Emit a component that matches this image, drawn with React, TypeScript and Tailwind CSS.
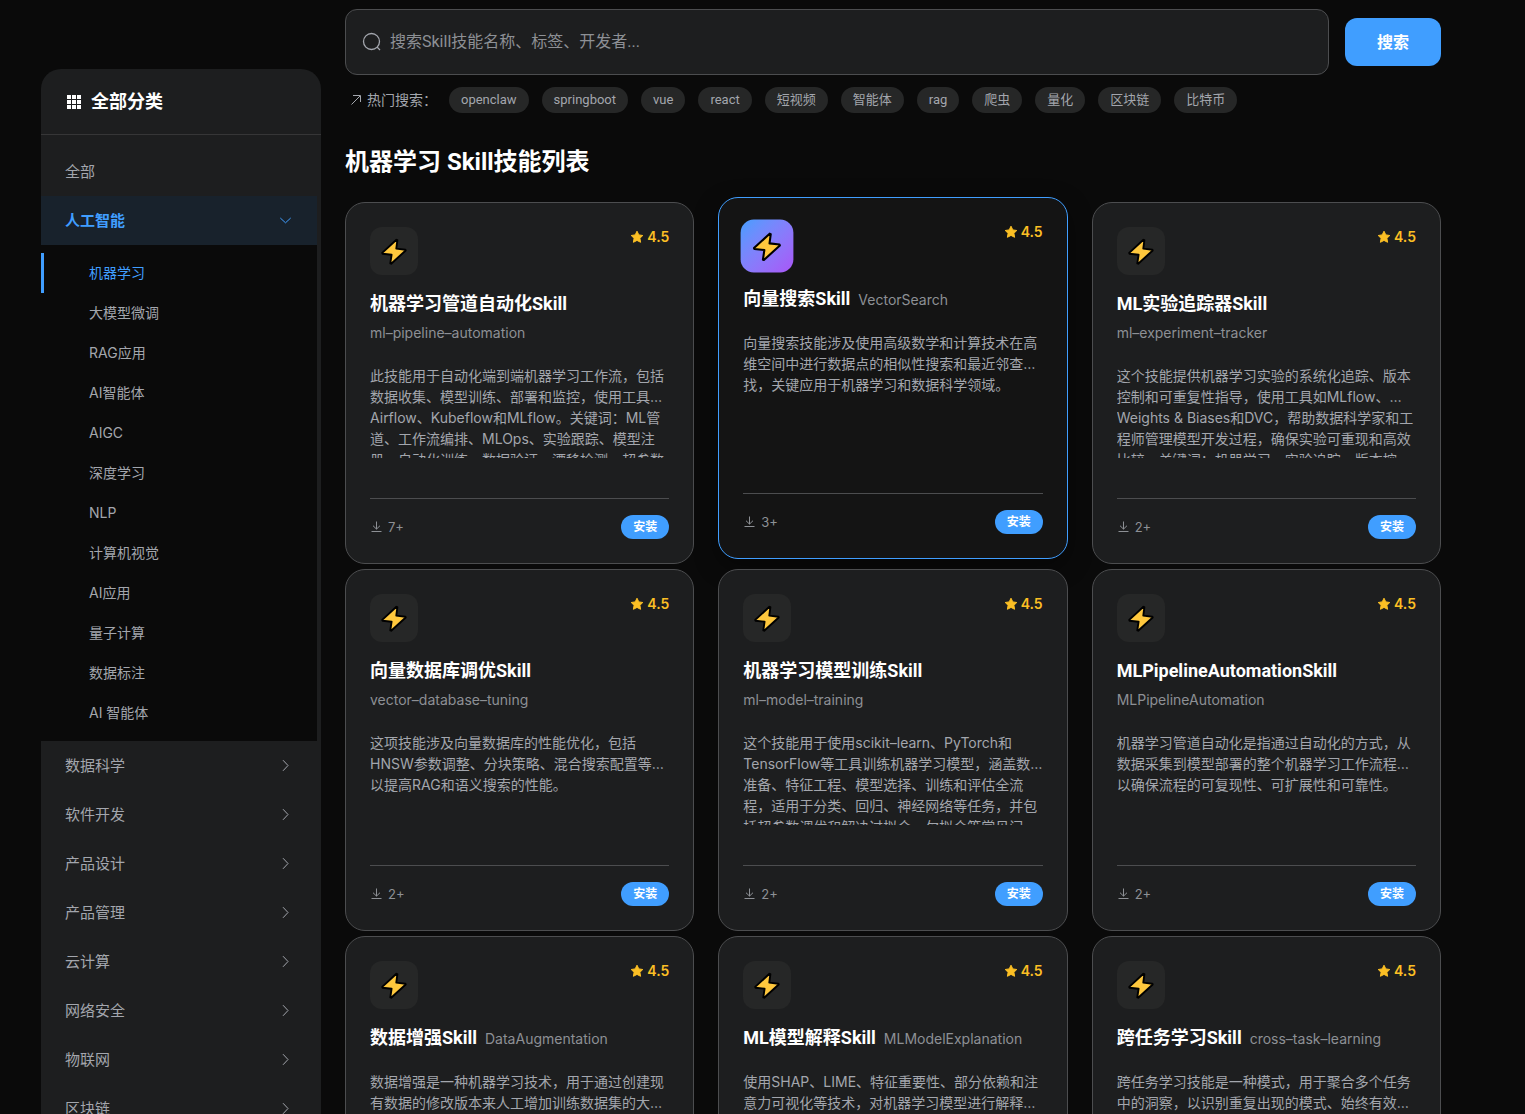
import React from "react";

const BODY_FONT = "font-['Inter','Noto_Sans_CJK_SC',sans-serif]";

const subItems = ["机器学习", "大模型微调", "RAG应用", "AI智能体", "AIGC", "深度学习", "NLP", "计算机视觉", "AI应用", "量子计算", "数据标注", "AI 智能体"];
const categories = ["数据科学", "软件开发", "产品设计", "产品管理", "云计算", "网络安全", "物联网", "区块链"];
const hotWords = ["openclaw", "springboot", "vue", "react", "短视频", "智能体", "rag", "爬虫", "量化", "区块链", "比特币"];

type Skill = { title: string; slug: string; stacked?: boolean; lines: string[]; count: string; active?: boolean };

const skills: Skill[] = [
  {
    title: "机器学习管道自动化Skill",
    slug: "ml–pipeline–automation",
    stacked: true,
    lines: ["此技能用于自动化端到端机器学习工作流，包括", "数据收集、模型训练、部署和监控，使用工具…", "Airflow、Kubeflow和MLflow。关键词：ML管", "道、工作流编排、MLOps、实验跟踪、模型注", "册、自动化训练、数据验证、漂移检测、超参数"],
    count: "7+",
  },
  {
    title: "向量搜索Skill",
    slug: "VectorSearch",
    lines: ["向量搜索技能涉及使用高级数学和计算技术在高", "维空间中进行数据点的相似性搜索和最近邻查…", "找，关键应用于机器学习和数据科学领域。"],
    count: "3+",
    active: true,
  },
  {
    title: "ML实验追踪器Skill",
    slug: "ml–experiment–tracker",
    stacked: true,
    lines: ["这个技能提供机器学习实验的系统化追踪、版本", "控制和可重复性指导，使用工具如MLflow、…", "Weights & Biases和DVC，帮助数据科学家和工", "程师管理模型开发过程，确保实验可重现和高效", "比较。关键词：机器学习、实验追踪、版本控"],
    count: "2+",
  },
  {
    title: "向量数据库调优Skill",
    slug: "vector–database–tuning",
    stacked: true,
    lines: ["这项技能涉及向量数据库的性能优化，包括", "HNSW参数调整、分块策略、混合搜索配置等…", "以提高RAG和语义搜索的性能。"],
    count: "2+",
  },
  {
    title: "机器学习模型训练Skill",
    slug: "ml–model–training",
    stacked: true,
    lines: ["这个技能用于使用scikit–learn、PyTorch和", "TensorFlow等工具训练机器学习模型，涵盖数…", "准备、特征工程、模型选择、训练和评估全流", "程，适用于分类、回归、神经网络等任务，并包", "括超参数调优和解决过拟合、欠拟合等常见问"],
    count: "2+",
  },
  {
    title: "MLPipelineAutomationSkill",
    slug: "MLPipelineAutomation",
    stacked: true,
    lines: ["机器学习管道自动化是指通过自动化的方式，从", "数据采集到模型部署的整个机器学习工作流程…", "以确保流程的可复现性、可扩展性和可靠性。"],
    count: "2+",
  },
  {
    title: "数据增强Skill",
    slug: "DataAugmentation",
    lines: ["数据增强是一种机器学习技术，用于通过创建现", "有数据的修改版本来人工增加训练数据集的大…"],
    count: "2+",
  },
  {
    title: "ML模型解释Skill",
    slug: "MLModelExplanation",
    lines: ["使用SHAP、LIME、特征重要性、部分依赖和注", "意力可视化等技术，对机器学习模型进行解释…"],
    count: "2+",
  },
  {
    title: "跨任务学习Skill",
    slug: "cross–task–learning",
    lines: ["跨任务学习技能是一种模式，用于聚合多个任务", "中的洞察，以识别重复出现的模式、始终有效…"],
    count: "2+",
  },
];

function Chevron({ down }: { down?: boolean }) {
  return (
    <svg viewBox="0 0 14 14" className="size-3.5" fill="none" stroke="currentColor" strokeWidth="1" aria-hidden="true">
      {down ? <path d="M1.3 4 6.5 8.800l5.200-4.800" /> : <path d="M4 1.200 9 6.500l-5 5.300" />}
    </svg>
  );
}

function Bolt({ className }: { className: string }) {
  return (
    <svg viewBox="0 0 28 28" className={className} aria-hidden="true">
      <path
        d="M16.400 2.800 2.200 15.900 2.500 16.700 11.600 17.700 10.300 26.400 11.200 26.700 25.700 13.500 25.400 12.700 16.300 11.600 17.400 3.200Z"
        fill="#ffc83d"
        stroke="#000"
        strokeWidth="1.900"
        strokeLinejoin="round"
      />
    </svg>
  );
}

function Star() {
  return (
    <svg viewBox="0 0 14 14" className="size-3.5" fill="#fbbf24" stroke="#fbbf24" strokeWidth="1" strokeLinejoin="round" aria-hidden="true">
      <path d="m7 1.2 1.8 3.7 4 .6-2.9 2.8.7 4L7 10.4l-3.6 1.9.7-4L1.2 5.5l4-.6Z" />
    </svg>
  );
}

function Card({ skill }: { skill: Skill }) {
  return (
    <article
      className={
        skill.active
          ? "-mt-[5px] mb-[5px] flex h-[362px] flex-col rounded-[20px] border border-[#409eff] bg-[#141414] p-6 shadow-[0_8px_24px_rgba(0,0,0,0.4)]"
          : "flex h-[362px] flex-col rounded-[20px] border border-[#4c4d4f] bg-[#1d1e1f] p-6"
      }
    >
      <div className="flex h-12 items-start justify-between">
        <div
          className={
            skill.active
              ? "flex size-12 scale-110 items-center justify-center rounded-xl bg-linear-135 from-[#409eff] to-[#a855f7]"
              : "flex size-12 items-center justify-center rounded-xl bg-[#262727]"
          }
        >
          <Bolt className="size-7" />
        </div>
        <div className="flex items-center gap-[3px] text-sm leading-5 font-semibold text-[#fbbf24]">
          <Star />
          <span>4.5</span>
        </div>
      </div>
      <div className={skill.stacked ? "mt-4 flex flex-col" : "mt-4 flex items-baseline gap-2"}>
        <h3 className="font-['Roboto','Noto_Sans_CJK_SC',sans-serif] text-lg leading-[26px] font-bold whitespace-nowrap text-white">{skill.title}</h3>
        <span className={skill.stacked ? "mt-1.5 text-sm leading-5 text-[#8d9095]" : "text-sm leading-[26px] text-[#8d9095]"}>{skill.slug}</span>
      </div>
      <div
        className={
          skill.stacked
            ? "mt-[22px] max-h-[93px] shrink-0 overflow-hidden text-sm leading-[21px] text-[#a3a6ad]"
            : "mt-[19px] max-h-[93px] shrink-0 overflow-hidden text-sm leading-[21px] text-[#a3a6ad]"
        }
      >
        {skill.lines.map((line) => (
          <p key={line} className="whitespace-nowrap">
            {line}
          </p>
        ))}
      </div>
      <div className="mt-auto flex items-center justify-between border-t border-[#4c4d4f] pt-4">
        <span className="flex items-center gap-1 text-[13px] leading-5 text-[#8d9095]">
          <svg viewBox="0 0 14 14" className="size-3.5" fill="none" stroke="currentColor" strokeWidth="1" aria-hidden="true">
            <path d="M6.500 1.500v7.500M3 5.700 6.500 9.100 10 5.700M1.500 11.500h10" />
          </svg>
          {skill.count}
        </span>
        <button type="button" className="h-6 rounded-full bg-[#409eff] px-3 text-xs font-semibold text-white">
          安装
        </button>
      </div>
    </article>
  );
}

export default function App() {
  return (
    <div className={`${BODY_FONT} h-screen overflow-hidden bg-[#0a0a0a] pr-[84px] pl-[41px]`}>
      <div className="flex items-start gap-6">
        <aside className="mt-[69px] w-[280px] shrink-0 overflow-hidden rounded-t-[20px] bg-[#1d1e1f]">
          <h2 className="flex h-[66px] items-center gap-2 border-b border-[#363637] px-6 text-lg font-bold text-white">
            <svg viewBox="0 0 18 18" className="size-[18px]" fill="currentColor" aria-hidden="true">
              {[2, 7, 12].map((y) => [2, 7, 12].map((x) => <rect key={`${x}-${y}`} x={x} y={y} width="4" height="4" />))}
            </svg>
            全部分类
          </h2>
          <nav className="mr-1 pt-3 text-[15px] leading-[25px] text-[#a3a6ad]" aria-label="全部分类">
            <a href="#all" className="flex h-[49px] items-center px-6">
              全部
            </a>
            <a href="#ai" className="flex h-[49px] items-center justify-between bg-[#18222c] px-6 font-semibold text-[#409eff]">
              人工智能
              <Chevron down />
            </a>
            <ul className="bg-[#0a0a0a] py-2 text-sm">
              {subItems.map((item, i) => (
                <li key={item}>
                  <a
                    href={`#sub-${i}`}
                    className={
                      i === 0
                        ? "flex h-10 items-center border-l-3 border-[#409eff] pl-[45px] text-[#409eff]"
                        : "flex h-10 items-center border-l-3 border-transparent pl-[45px]"
                    }
                  >
                    {item}
                  </a>
                </li>
              ))}
            </ul>
            {categories.map((item) => (
              <a key={item} href={`#${item}`} className="flex h-[49px] items-center justify-between px-6">
                {item}
                <Chevron />
              </a>
            ))}
          </nav>
        </aside>
        <main className="min-w-0 flex-1 pt-[9px]">
          <form className="flex items-center gap-4" onSubmit={(e) => e.preventDefault()}>
            <label className="flex h-[66px] flex-1 items-center gap-2 rounded-xl border border-[#4c4d4f] bg-[#1d1e1f] px-4">
              <svg viewBox="0 0 20 20" className="size-5 shrink-0" fill="none" stroke="#a3a6ad" strokeWidth="1.3" aria-hidden="true">
                <circle cx="9.500" cy="9.500" r="8" />
                <path d="m15 15 3 3" />
              </svg>
              <input
                type="text"
                aria-label="搜索"
                placeholder="搜索Skill技能名称、标签、开发者..."
                className="min-w-0 flex-1 bg-transparent font-['Roboto','Noto_Sans_CJK_SC',sans-serif] text-base text-white outline-none placeholder:text-[#8d9095]"
              />
            </label>
            <button type="submit" className="h-12 w-24 rounded-xl bg-[#409eff] text-base font-bold text-white">
              搜索
            </button>
          </form>
          <div className="mt-3 flex h-[26px] items-center gap-[13px] text-[13px] text-[#a3a6ad]">
            <span className="flex w-[91px] items-center gap-1 pl-1 text-sm whitespace-nowrap">
              <svg viewBox="0 0 14 14" className="size-3.5 shrink-0" fill="none" stroke="currentColor" strokeWidth="1" aria-hidden="true">
                <path d="M2.500 11.500 11 3M4 2.500h7.500V9" />
              </svg>
              热门搜索：
            </span>
            {hotWords.map((word) => (
              <button
                key={word}
                type="button"
                className="h-[26px] rounded-full bg-[#262727] px-3 font-['Roboto','Noto_Sans_CJK_SC',sans-serif] whitespace-nowrap"
              >
                {word}
              </button>
            ))}
          </div>
          <h1 className="mt-[33px] font-['Roboto','Noto_Sans_CJK_SC',sans-serif] text-2xl leading-8 font-bold text-white">机器学习 Skill技能列表</h1>
          <section className="mt-6 grid grid-cols-3 gap-x-6 gap-y-[5px]">
            {skills.map((skill) => (
              <Card key={skill.title} skill={skill} />
            ))}
          </section>
        </main>
      </div>
    </div>
  );
}
